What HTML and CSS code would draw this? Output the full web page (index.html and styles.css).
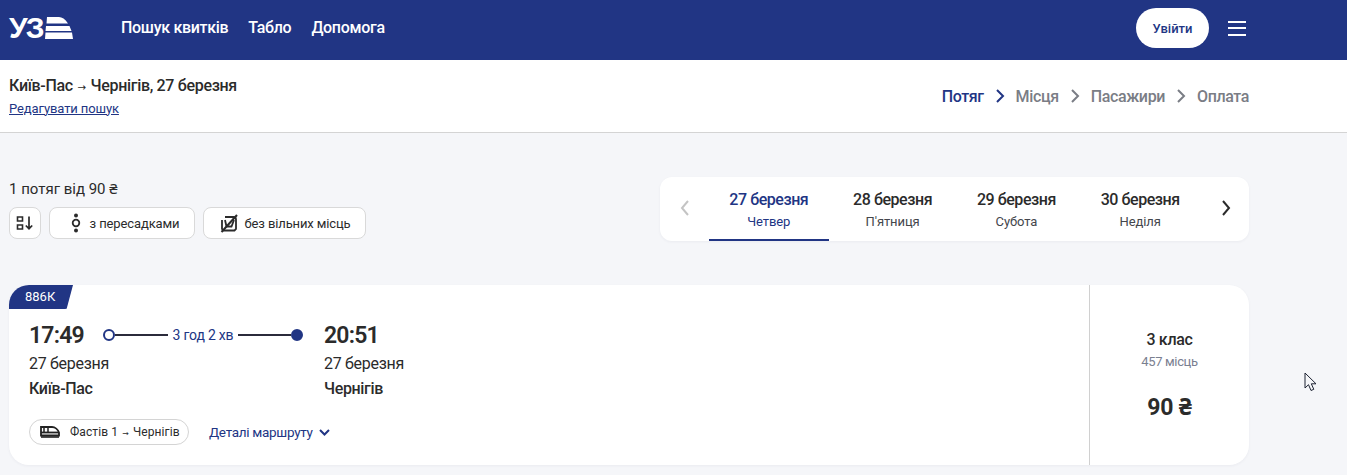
FILE: index.html
```html
<!DOCTYPE html>
<html lang="uk">
<head>
    <meta charset="UTF-8">
    <meta name="viewport" content="width=device-width, initial-scale=1.0">
    <title>Укрзалізниця - Пошук квитків</title>
    <link rel="stylesheet" href="styles.css">
</head>
<body>
    <header class="topbar">
        <a class="logo" href="#">
            <span class="logo-text">УЗ</span>
            <svg class="logo-rails" width="28" height="22" viewBox="0 0 28 22" aria-hidden="true">
                <path d="M2 0h12c3 0 6 2 9 6.500H1.500zM1 9h23.500l2 5H0.500zM0.500 15.500h26.500l1 6.500H0z" fill="#fff"/>
            </svg>
        </a>
        <nav class="main-nav">
            <a href="#">Пошук квитків</a>
            <a href="#">Табло</a>
            <a href="#">Допомога</a>
        </nav>
        <button class="login-btn">Увійти</button>
        <button class="menu-btn" aria-label="Меню"><span></span><span></span><span></span></button>
    </header>

    <section class="subbar">
        <div class="search-info">
            <div class="search-title">Київ-Пас <span class="arrow">→</span> Чернігів, 27 березня</div>
            <a class="edit-link" href="#">Редагувати пошук</a>
        </div>
        <ol class="steps">
            <li class="active">Потяг</li>
            <li class="sep active"><svg width="10" height="16" viewBox="0 0 10 16"><path d="M2 2l6 6-6 6" fill="none" stroke="currentColor" stroke-width="2"/></svg></li>
            <li>Місця</li>
            <li class="sep"><svg width="10" height="16" viewBox="0 0 10 16"><path d="M2 2l6 6-6 6" fill="none" stroke="currentColor" stroke-width="2"/></svg></li>
            <li>Пасажири</li>
            <li class="sep"><svg width="10" height="16" viewBox="0 0 10 16"><path d="M2 2l6 6-6 6" fill="none" stroke="currentColor" stroke-width="2"/></svg></li>
            <li>Оплата</li>
        </ol>
    </section>

    <main class="content">
        <div class="toolbar">
            <div class="filters">
                <div class="found">1 потяг від 90 ₴</div>
                <div class="filter-row">
                    <button class="filter-btn sort-btn" aria-label="Сортування">
                        <svg width="18" height="16" viewBox="0 0 18 16"><path d="M1.500 2h5v4h-5zM1.500 10h5v4h-5z" fill="none" stroke="#2b2b2b" stroke-width="1.600"/><path d="M13 1.500v12M9.800 10.500l3.200 3.200 3.200-3.200" fill="none" stroke="#2b2b2b" stroke-width="1.700"/></svg>
                    </button>
                    <button class="filter-btn transfer-btn">
                        <svg width="10" height="20" viewBox="0 0 10 20"><circle cx="5" cy="2.500" r="2" fill="#2b2b2b"/><circle cx="5" cy="10" r="3.300" fill="none" stroke="#2b2b2b" stroke-width="1.800"/><circle cx="5" cy="17.500" r="2" fill="#2b2b2b"/></svg>
                        з пересадками
                    </button>
                    <button class="filter-btn seats-btn">
                        <svg width="18" height="19" viewBox="0 0 18 19"><path d="M5 3h8.500c1.500 0 2.500 1 2.500 2.500v9.500l-1.500 1.500H3.500L2 15V6" fill="none" stroke="#2b2b2b" stroke-width="1.800"/><path d="M5 6l1.500 6.500h5L14 6" fill="none" stroke="#2b2b2b" stroke-width="1.800"/><path d="M17 1L1.500 18" stroke="#2b2b2b" stroke-width="2"/></svg>
                        без вільних місць
                    </button>
                </div>
            </div>
            <div class="dates">
                <button class="date-arrow" aria-label="Назад"><svg width="12" height="18" viewBox="0 0 12 18"><path d="M9 2L3 9l6 7" fill="none" stroke="#c4c4c4" stroke-width="2"/></svg></button>
                <div class="date-tab active"><strong>27 березня</strong><span>Четвер</span></div>
                <div class="date-tab"><strong>28 березня</strong><span>П'ятниця</span></div>
                <div class="date-tab"><strong>29 березня</strong><span>Субота</span></div>
                <div class="date-tab"><strong>30 березня</strong><span>Неділя</span></div>
                <button class="date-arrow" aria-label="Вперед"><svg width="12" height="18" viewBox="0 0 12 18"><path d="M3 2l6 7-6 7" fill="none" stroke="#2b2b2b" stroke-width="2"/></svg></button>
            </div>
        </div>

        <article class="train-card">
            <div class="train-badge">886К</div>
            <div class="train-main">
                <div class="route">
                    <div class="stop stop-from">
                        <div class="time-row">
                            <div class="time">17:49</div>
                            <div class="timeline">
                                <i class="dot"></i><i class="line"></i>
                                <span class="duration">3 год 2 хв</span>
                                <i class="line"></i><i class="dot dot-end"></i>
                            </div>
                        </div>
                        <div class="stop-date">27 березня</div>
                        <div class="stop-name">Київ-Пас</div>
                    </div>
                    <div class="stop">
                        <div class="time">20:51</div>
                        <div class="stop-date">27 березня</div>
                        <div class="stop-name">Чернігів</div>
                    </div>
                </div>
                <div class="train-meta">
                    <div class="route-pill">
                        <svg width="20" height="12" viewBox="0 0 20 12"><path d="M1 1h11c3 0 6 2.500 7 5.500V9.500H1z" fill="none" stroke="#222" stroke-width="1.800"/><path d="M1 6.500h18" stroke="#222" stroke-width="1.800"/><path d="M4 2v4M8 2v4" stroke="#222" stroke-width="1.500"/><path d="M1 11h18" stroke="#222" stroke-width="1.600"/></svg>
                        <span>Фастів 1 <span class="arrow">→</span> Чернігів</span>
                    </div>
                    <a class="details-link" href="#">Деталі маршруту
                        <svg width="11" height="7" viewBox="0 0 11 7"><path d="M1 1l4.500 4.500L10 1" fill="none" stroke="currentColor" stroke-width="2"/></svg>
                    </a>
                </div>
            </div>
            <div class="train-price">
                <div class="class-name">3 клас</div>
                <div class="seats-left">457 місць</div>
                <div class="price">90 ₴</div>
            </div>
        </article>
    </main>

    <svg class="mouse-cursor" width="13" height="20" viewBox="0 0 13 20" aria-hidden="true">
        <path d="M1 1v15l3.500-3.300L7 18.500l2.800-1.200-2.500-5.500H12z" fill="#f5f6f9" stroke="#1d2333" stroke-width="1"/>
    </svg>
</body>
</html>
```

FILE: styles.css
```css
* {
    box-sizing: border-box;
}
html, body {
    height: 100%;
}
body {
    margin: 0;
    position: relative;
    overflow: hidden;
    background-color: #f5f6f9;
    color: #2b2b2b;
    font-family: Roboto, "Noto Sans", Arial, sans-serif;
    font-size: 16px;
}
a {
    color: inherit;
    text-decoration: none;
}
button {
    font-family: inherit;
    cursor: pointer;
}

/* top bar */
.topbar {
    height: 60px;
    display: flex;
    align-items: center;
    padding: 0 101px 4px 9px;
    background-color: #213584;
    color: #fff;
}
.logo {
    width: 64px;
    height: 22px;
    margin-right: 48px;
    display: flex;
    align-items: center;
    position: relative;
}
.logo-text {
    font-family: "Liberation Sans", Arial, sans-serif;
    font-size: 30px;
    font-weight: 700;
    letter-spacing: -2px;
    line-height: 22px;
}
.logo-rails {
    position: absolute;
    left: 36px;
    top: 0;
}
.main-nav {
    display: flex;
    gap: 20px;
    flex-grow: 1;
    margin-bottom: 2px;
    font-weight: 500;
    font-size: 16px;
    letter-spacing: -0.3px;
}
.login-btn {
    width: 73px;
    height: 40px;
    border: none;
    border-radius: 20px;
    background-color: #fff;
    color: #213584;
    font-size: 13px;
    font-weight: 500;
}
.menu-btn {
    width: 18px;
    height: 15px;
    margin-left: 19px;
    padding: 0;
    border: none;
    background: none;
    display: flex;
    flex-direction: column;
    justify-content: space-between;
}
.menu-btn span {
    display: block;
    height: 2px;
    background-color: #fff;
}

/* route summary and steps */
.subbar {
    height: 73px;
    display: flex;
    align-items: center;
    justify-content: space-between;
    padding: 0 98px 0 9px;
    background-color: #fff;
    border-bottom: 1px solid #d4d4d4;
}
.search-title {
    font-size: 16px;
    font-weight: 500;
    line-height: 20px;
    letter-spacing: -0.32px;
}
.arrow {
    margin: 0 1px;
    font-family: "DejaVu Sans", sans-serif;
    font-size: 0.65em;
}
.edit-link {
    display: block;
    margin-top: 4px;
    font-size: 13px;
    line-height: 16px;
    letter-spacing: -0.1px;
    color: #213584;
    text-decoration: underline;
}
.steps {
    display: flex;
    align-items: center;
    gap: 11px;
    margin: 0;
    padding: 0;
    list-style: none;
    color: #7a7d85;
    font-size: 16px;
    font-weight: 500;
    letter-spacing: -0.38px;
}
.steps .active {
    color: #213584;
}
.steps .sep {
    display: flex;
}

/* toolbar with filters and dates */
.content {
    width: 1240px;
    margin-left: 9px;
}
.toolbar {
    display: flex;
    justify-content: space-between;
    align-items: flex-start;
    height: 64px;
    margin-top: 44px;
}
.filters {
    padding-top: 2px;
}
.found {
    font-size: 15px;
    line-height: 20px;
    margin-bottom: 8px;
}
.filter-row {
    display: flex;
    gap: 8px;
}
.filter-btn {
    height: 32px;
    display: flex;
    align-items: center;
    justify-content: center;
    gap: 9px;
    padding: 0;
    background-color: #fff;
    border: 1px solid #d9d9d9;
    border-radius: 8px;
    color: #2b2b2b;
    font-size: 13px;
    letter-spacing: -0.12px;
}
.sort-btn {
    width: 32px;
}
.transfer-btn {
    width: 146px;
    padding-left: 6px;
}
.seats-btn {
    width: 163px;
    padding-left: 2px;
    gap: 6px;
}
.dates {
    width: 589px;
    height: 64px;
    display: flex;
    gap: 4px;
    background-color: #fff;
    border-radius: 12px;
    box-shadow: 0 1px 3px rgba(30, 40, 80, 0.05);
}
.date-arrow {
    width: 45px;
    padding: 0 0 0 5px;
    border: none;
    background: none;
}
.date-arrow:last-child {
    padding: 0 2px 0 0;
}
.date-tab {
    width: 120px;
    display: flex;
    flex-direction: column;
    align-items: center;
    padding-top: 13px;
    font-size: 13px;
    letter-spacing: -0.1px;
    color: #44464c;
}
.date-tab strong {
    color: #2b2b2b;
    font-size: 16px;
    font-weight: 500;
    line-height: 20px;
    letter-spacing: -0.45px;
    margin-bottom: 4px;
}
.date-tab.active {
    color: #213584;
    border-bottom: 2px solid #213584;
}
.date-tab.active strong {
    color: #213584;
}

/* train card */
.train-card {
    position: relative;
    display: flex;
    height: 180px;
    margin-top: 44px;
    background-color: #fff;
    border-radius: 20px;
    box-shadow: 0 1px 3px rgba(30, 40, 80, 0.05);
}
.train-badge {
    position: absolute;
    left: 0;
    top: 0;
    width: 64px;
    height: 24px;
    padding-left: 16px;
    background-color: #213584;
    border-radius: 20px 0 8px 0;
    color: #fff;
    font-size: 13px;
    line-height: 23px;
    clip-path: polygon(0 0, 100% 0, 90% 100%, 0 100%);
}
.train-main {
    flex-grow: 1;
    padding: 37px 20px 0;
}
.route {
    display: flex;
}
.stop-from {
    width: 295px;
}
.time-row {
    display: flex;
    align-items: center;
}
.time {
    width: 74px;
    font-size: 23px;
    font-weight: 600;
    line-height: 28px;
    letter-spacing: -0.8px;
}
.timeline {
    width: 200px;
    display: flex;
    align-items: center;
    margin-top: -2px;
}
.dot {
    width: 12px;
    height: 12px;
    border: 2px solid #213584;
    border-radius: 50%;
    flex-shrink: 0;
}
.dot-end {
    background-color: #213584;
}
.line {
    flex-grow: 1;
    height: 2px;
    background-color: #2b2b3b;
}
.duration {
    margin: 0 5px;
    font-size: 14px;
    letter-spacing: -0.2px;
    color: #213584;
}
.stop-date {
    margin-top: 3px;
    font-size: 16px;
    line-height: 22px;
    letter-spacing: -0.3px;
}
.stop-name {
    margin-top: 3px;
    font-size: 16px;
    font-weight: 500;
    line-height: 22px;
    letter-spacing: -0.35px;
}
.train-meta {
    display: flex;
    align-items: center;
    gap: 20px;
    margin-top: 19px;
}
.route-pill {
    width: 160px;
    height: 26px;
    display: flex;
    align-items: center;
    gap: 10px;
    padding-left: 10px;
    background-color: #fff;
    border: 1px solid #d4d4d4;
    border-radius: 13px;
    font-size: 12px;
    letter-spacing: 0.1px;
}
.details-link {
    display: flex;
    align-items: center;
    gap: 6px;
    color: #213584;
    font-size: 13.500px;
    letter-spacing: -0.3px;
}
.train-price {
    width: 160px;
    border-left: 1px solid #d0d0d0;
    text-align: center;
    padding-top: 44px;
}
.class-name {
    font-size: 16px;
    font-weight: 500;
    line-height: 22px;
    letter-spacing: -0.3px;
}
.seats-left {
    margin-top: 2px;
    color: #7a8090;
    font-size: 13px;
    line-height: 18px;
    letter-spacing: -0.35px;
}
.price {
    margin-top: 22px;
    font-size: 23px;
    font-weight: 700;
    line-height: 30px;
    letter-spacing: -0.2px;
}
.mouse-cursor {
    position: absolute;
    left: 1304px;
    top: 372px;
}
```
